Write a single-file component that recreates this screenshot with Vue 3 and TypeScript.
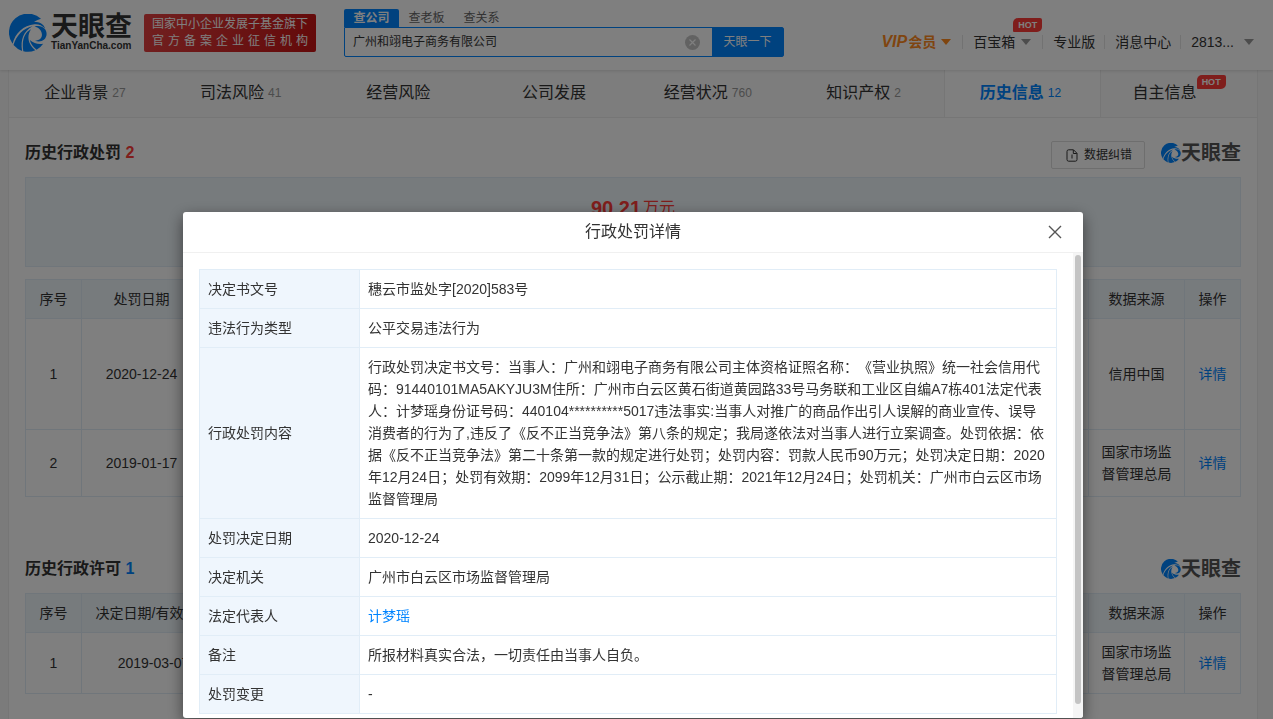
<script setup lang="ts">
import { ref } from 'vue'

interface NavTab { label: string; count?: number; active?: boolean; hot?: boolean }
interface DetailRow { label: string; value: string; link?: boolean }

const keyword = ref('广州和翊电子商务有限公司')

const tabs: NavTab[] = [
  { label: '企业背景', count: 27 },
  { label: '司法风险', count: 41 },
  { label: '经营风险' },
  { label: '公司发展' },
  { label: '经营状况', count: 760 },
  { label: '知识产权', count: 2 },
  { label: '历史信息', count: 12, active: true },
  { label: '自主信息', hot: true },
]

const penalties = [
  { no: 1, date: '2020-12-24', source: '信用中国', tall: true },
  { no: 2, date: '2019-01-17', source: '国家市场监督管理总局', tall: false },
]

const details: DetailRow[] = [
  { label: '决定书文号', value: '穗云市监处字[2020]583号' },
  { label: '违法行为类型', value: '公平交易违法行为' },
  {
    label: '行政处罚内容',
    value:
      '行政处罚决定书文号：当事人：广州和翊电子商务有限公司主体资格证照名称：《营业执照》统一社会信用代码：91440101MA5AKYJU3M住所：广州市白云区黄石街道黄园路33号马务联和工业区自编A7栋401法定代表人：计梦瑶身份证号码：440104**********5017违法事实:当事人对推广的商品作出引人误解的商业宣传、误导消费者的行为了,违反了《反不正当竞争法》第八条的规定；我局遂依法对当事人进行立案调查。处罚依据：依据《反不正当竞争法》第二十条第一款的规定进行处罚；处罚内容：罚款人民币90万元；处罚决定日期：2020年12月24日；处罚有效期：2099年12月31日；公示截止期：2021年12月24日；处罚机关：广州市白云区市场监督管理局',
  },
  { label: '处罚决定日期', value: '2020-12-24' },
  { label: '决定机关', value: '广州市白云区市场监督管理局' },
  { label: '法定代表人', value: '计梦瑶', link: true },
  { label: '备注', value: '所报材料真实合法，一切责任由当事人自负。' },
  { label: '处罚变更', value: '-' },
]
</script>

<template>
  <div class="page">
    <svg class="defs" width="0" height="0" aria-hidden="true">
      <symbol id="swirl" viewBox="0 0 38 38">
        <path fill="#0084ff" d="M32 4.800A19 19 0 0 0 3.600 29.800C6.200 19 14.500 11.200 25.500 10.200C29.500 9.900 33 11 36.200 14.600C34.500 10 31 8.200 25 7.800C27.500 6.500 29.800 5.500 32 4.800Z" />
        <path fill="#0084ff" d="M4.500 31.100C7.500 21.500 14 14.200 23.500 12.300C14.500 17.500 11.200 25.500 13.100 36.900A19 19 0 0 1 4.500 31.100Z" />
        <path fill="#0084ff" d="M14.300 37.200C12.600 26.600 15.300 18.600 22 15.200C17.600 21.500 18.700 30.500 26.300 36.300A19 19 0 0 1 14.300 37.200Z" />
        <path fill="#0084ff" d="M27.600 35.700C24 32.800 21.800 30 20.800 26C25 29.600 29.500 30.600 34.200 29.700A19 19 0 0 1 27.600 35.700Z" />
        <path fill="#0084ff" d="M25.500 12.600C33 10.600 37.700 15 37.600 20C37.400 26 31.600 29 26 26.700C30.800 26.500 33.200 23.800 32.900 20.300C32.600 16.500 29.600 13.600 25.500 12.600Z" />
      </symbol>
    </svg>

    <header class="header">
      <a class="brand" href="#">
        <svg class="brand-mark"><use href="#swirl" /></svg>
        <span class="brand-text">
          <span class="brand-name">天眼查</span>
          <span class="brand-domain">TianYanCha.com</span>
        </span>
      </a>
      <div class="badge">
        <div>国家中小企业发展子基金旗下</div>
        <div>官方备案企业征信机构</div>
      </div>
      <form class="search" @submit.prevent>
        <div class="search-tabs">
          <button type="button" class="search-tab on">查公司</button>
          <button type="button" class="search-tab">查老板</button>
          <button type="button" class="search-tab">查关系</button>
        </div>
        <div class="search-bar">
          <input v-model="keyword" type="text" aria-label="查公司" />
          <button type="button" class="clear" aria-label="清除">
            <svg viewBox="0 0 15 15" width="15" height="15">
              <circle cx="7.500" cy="7.500" r="7.500" fill="#c4c4c4" />
              <path d="M4.500 4.500l6 6M10.500 4.500l-6 6" stroke="#fff" stroke-width="1.200" />
            </svg>
          </button>
          <button type="submit" class="go">天眼一下</button>
        </div>
      </form>
      <nav class="menu">
        <a class="vip" href="#"><em>VIP</em>会员<i class="caret" /></a>
        <a class="box" href="#">百宝箱<i class="caret" /><b class="hot">HOT</b></a>
        <a href="#">专业版</a>
        <a href="#">消息中心</a>
        <a class="user" href="#">2813...<i class="caret" /></a>
      </nav>
    </header>

    <main class="card">
      <nav class="tabs">
        <a v-for="t in tabs" :key="t.label" href="#" :class="{ active: t.active }">
          <span>{{ t.label }}</span>
          <small v-if="t.count">{{ t.count }}</small>
          <b v-if="t.hot" class="hot">HOT</b>
        </a>
      </nav>

      <section class="section">
        <div class="section-head">
          <h2>历史行政处罚 <span class="red">2</span></h2>
          <button type="button" class="fix">
            <svg viewBox="0 0 12 13" width="12" height="13" fill="none" stroke="#333">
              <path d="M1 2.500Q1 .8 2.600 .8H7.500L11 4.300V10.500Q11 12.200 9.400 12.200H2.600Q1 12.200 1 10.500Z" />
              <path d="M7.300 1V4.500H10.800M6 9.500V5.500" />
            </svg>
            数据纠错
          </button>
          <span class="stamp"><svg><use href="#swirl" /></svg>天眼查</span>
        </div>
        <div class="summary"><strong>90.21</strong><span>万元</span></div>
        <table class="grid">
          <colgroup><col class="c-no" /><col class="c-date" /><col /><col class="c-source" /><col class="c-op" /></colgroup>
          <thead>
            <tr><th>序号</th><th>处罚日期</th><th></th><th>数据来源</th><th>操作</th></tr>
          </thead>
          <tbody>
            <tr v-for="p in penalties" :key="p.no" :class="p.tall ? 'tall' : 'mid'">
              <td>{{ p.no }}</td><td>{{ p.date }}</td><td></td><td>{{ p.source }}</td>
              <td><a href="#">详情</a></td>
            </tr>
          </tbody>
        </table>
      </section>

      <section class="section second">
        <div class="section-head">
          <h2>历史行政许可 <span class="blue">1</span></h2>
          <span class="stamp"><svg><use href="#swirl" /></svg>天眼查</span>
        </div>
        <table class="grid">
          <colgroup><col class="c-no" /><col class="c-valid" /><col /><col class="c-source" /><col class="c-op" /></colgroup>
          <thead>
            <tr><th>序号</th><th>决定日期/有效期至</th><th></th><th>数据来源</th><th>操作</th></tr>
          </thead>
          <tbody>
            <tr>
              <td>1</td><td>2019-03-07</td><td></td><td>国家市场监督管理总局</td>
              <td><a href="#">详情</a></td>
            </tr>
          </tbody>
        </table>
      </section>
    </main>

    <div class="mask">
      <div class="dialog" role="dialog" aria-labelledby="dialog-title">
        <div class="dialog-head">
          <h3 id="dialog-title">行政处罚详情</h3>
          <button type="button" class="close" aria-label="关闭">
            <svg viewBox="0 0 14 14" width="14" height="14"><path d="M1 1L13 13M13 1L1 13" stroke="#555" stroke-width="1.400" /></svg>
          </button>
        </div>
        <div class="dialog-body">
          <table class="detail">
            <tbody>
              <tr v-for="d in details" :key="d.label">
                <th scope="row">{{ d.label }}</th>
                <td><a v-if="d.link" href="#">{{ d.value }}</a><template v-else>{{ d.value }}</template></td>
              </tr>
            </tbody>
          </table>
          <div class="track"><div class="thumb" /></div>
        </div>
      </div>
    </div>
  </div>
</template>

<style>
body {
  margin: 0;
  background: #f7f7f7;
}
</style>

<style scoped>
* {
  box-sizing: border-box;
}
.page {
  display: flex;
  flex-direction: column;
  height: 100vh;
  overflow: hidden;
  font: 14px/22px 'Liberation Sans', 'Noto Sans CJK SC', sans-serif;
  color: #333;
  text-spacing-trim: space-all;
}
.defs {
  position: absolute;
}
a {
  color: #0084ff;
  text-decoration: none;
}
button,
input {
  font: inherit;
  color: inherit;
  border: 0;
  padding: 0;
  margin: 0;
  background: none;
}
h2,
h3 {
  margin: 0;
}
.header {
  display: flex;
  flex: none;
  height: 70px;
  padding: 0 19px 0 9px;
  background: #fff;
  box-shadow: 0 1px 3px rgba(0, 0, 0, 0.12);
  position: relative;
}
.brand {
  display: flex;
  gap: 4px;
  width: 135px;
  padding-top: 14px;
  color: #333;
}
.brand-mark {
  width: 38px;
  height: 38px;
}
.brand-text {
  display: flex;
  flex-direction: column;
}
.brand-name {
  font-size: 27px;
  font-weight: bold;
  line-height: 26px;
}
.brand-domain {
  font-size: 10px;
  font-weight: bold;
  line-height: 12px;
}
.badge {
  width: 172px;
  height: 38px;
  margin-top: 14px;
  padding: 2px 8px;
  border-radius: 2px;
  background: linear-gradient(100deg, #e34040, #c81414);
  color: #fff;
  font-size: 12px;
  line-height: 17px;
  white-space: nowrap;
  text-align: justify;
  text-align-last: justify;
}
.search {
  width: 440px;
  margin: 9px 0 0 28px;
}
.search-tabs {
  display: flex;
  height: 18px;
}
.search-tab {
  width: 55px;
  font-size: 12px;
  line-height: 18px;
  color: #666;
}
.search-tab.on {
  background: #0084ff;
  color: #fff;
  font-weight: bold;
  border-radius: 2px 2px 0 0;
}
.search-bar {
  display: flex;
  align-items: center;
  height: 30px;
  border: 1px solid #0084ff;
  border-radius: 0 2px 2px 2px;
  background: #fff;
}
.search-bar input {
  flex: 1;
  min-width: 0;
  padding: 1px 0 0 8px;
  font-size: 12px;
  line-height: 27px;
  outline: none;
}
.clear {
  display: flex;
  margin-right: 12px;
}
.go {
  width: 71px;
  height: 28px;
  background: #0084ff;
  color: #fff;
  font-size: 12px;
}
.menu {
  display: flex;
  align-items: center;
  height: 14px;
  margin: 35px 0 0 auto;
}
.menu a {
  display: flex;
  align-items: center;
  height: 14px;
  padding: 0 9px 0 10px;
  color: #333;
  white-space: nowrap;
  position: relative;
}
.menu a + a {
  border-left: 1px solid #e5e5e5;
}
.menu a.user {
  padding-right: 0;
}
.menu a.vip,
.menu a.box {
  padding-right: 11px;
}
.menu a.vip {
  color: #ff8a1f;
  font-weight: bold;
}
.vip em {
  font-size: 16px;
  margin-right: 1px;
}
.caret {
  border: 5px solid transparent;
  border-top: 6px solid #999;
  border-bottom: 0;
  margin-left: 6px;
}
.vip .caret {
  border-top-color: #ff8a1f;
  margin-left: 5px;
}
.user .caret {
  margin-left: 10px;
}
.hot {
  padding: 0 5px;
  border-radius: 5px 2px 5px 1px;
  background: #ff3c38;
  color: #fff;
  font-size: 9px;
  line-height: 14px;
}
.box .hot {
  position: absolute;
  top: -17px;
  right: 0;
}
.card {
  flex: 1;
  margin: 0 15px 0 8px;
  border: solid #ededed;
  border-width: 0 1px;
  background: #fff;
}
.tabs {
  display: flex;
  height: 48px;
  border-bottom: 1px solid #ececec;
  background: #fafafa;
}
.tabs a {
  display: flex;
  flex: 1;
  justify-content: center;
  gap: 4px;
  font-size: 16px;
  line-height: 46px;
  color: #333;
}
.tabs small {
  margin-right: 4px;
  font-size: 12px;
  color: #999;
}
.tabs a.active {
  background: #fff;
  border: solid #ececec;
  border-width: 0 1px;
  color: #0084ff;
  font-weight: bold;
}
.tabs .active small {
  color: #0084ff;
  font-weight: normal;
}
.tabs .hot {
  height: 14px;
  margin: 5px 0 0 -4px;
}
.section {
  padding: 20px 16px 0;
}
.section.second {
  padding-top: 57px;
}
.section-head {
  display: flex;
  gap: 16px;
  height: 39px;
  padding-top: 3px;
}
.section-head h2 {
  flex: 1;
  font-size: 16px;
  line-height: 24px;
}
.red {
  color: #ff3c38;
}
.blue {
  color: #0084ff;
}
.fix {
  display: flex;
  align-items: center;
  gap: 6px;
  height: 28px;
  padding: 0 12px 0 14px;
  border: 1px solid #dcdcdc;
  border-radius: 2px;
  font-size: 12px;
}
.stamp {
  display: flex;
  height: 24px;
  align-items: center;
  font-size: 20px;
  font-weight: bold;
  color: #555;
}
.stamp svg {
  width: 20px;
  height: 20px;
}
.summary {
  display: flex;
  justify-content: center;
  gap: 2px;
  height: 90px;
  padding-top: 16px;
  border: 1px solid #e1edf7;
  background: #eff6fb;
  color: #ff3c38;
  line-height: 28px;
  margin-bottom: 12px;
}
.summary strong {
  font-size: 20px;
}
.summary span {
  font-size: 16px;
}
.grid,
.detail {
  width: 100%;
  border-collapse: collapse;
  table-layout: fixed;
}
.grid th,
.grid td {
  padding: 8px 12px;
  border: 1px solid #e1edf7;
  text-align: center;
  font-weight: normal;
}
.grid th {
  height: 39px;
  padding: 8px 0;
  background: #eff6fb;
  white-space: nowrap;
}
.grid .c-no,
.grid .c-op {
  width: 56px;
}
.grid .c-date {
  width: 120px;
}
.grid .c-valid {
  width: 144px;
}
.grid .c-source {
  width: 96px;
}
.grid td {
  height: 61px;
}
.grid .mid td {
  height: 67px;
}
.grid .tall td {
  height: 111px;
}
.mask {
  position: fixed;
  inset: 0;
  display: flex;
  align-items: flex-end;
  justify-content: center;
  padding: 0 7px 1px 0;
  background: rgba(0, 0, 0, 0.5);
}
.dialog {
  width: 900px;
  max-width: 100%;
  border-radius: 3px;
  background: #fff;
  box-shadow: 0 5px 15px rgba(0, 0, 0, 0.5);
}
.dialog-head {
  display: flex;
  align-items: center;
  height: 41px;
  padding: 0 20px 0 36px;
  border-bottom: 1px solid #f0f0f0;
}
.dialog-head h3 {
  flex: 1;
  font-size: 16px;
  font-weight: normal;
  text-align: center;
}
.close {
  display: flex;
  padding: 1px;
}
.dialog-body {
  display: flex;
  gap: 16px;
  padding-left: 16px;
}
.detail {
  flex: 1;
  margin: 16px 0 4px;
}
.detail th,
.detail td {
  padding: 8px;
  border: 1px solid #e1edf7;
  text-align: left;
  font-weight: normal;
}
.detail th {
  width: 160px;
  background: #eff6fd;
}
.track {
  width: 10px;
  padding: 2px 2px 14px;
  border-radius: 0 0 3px 0;
  background: #f5f5f5;
}
.thumb {
  height: 100%;
  border-radius: 3px;
  background: #c4c4c4;
}
</style>
